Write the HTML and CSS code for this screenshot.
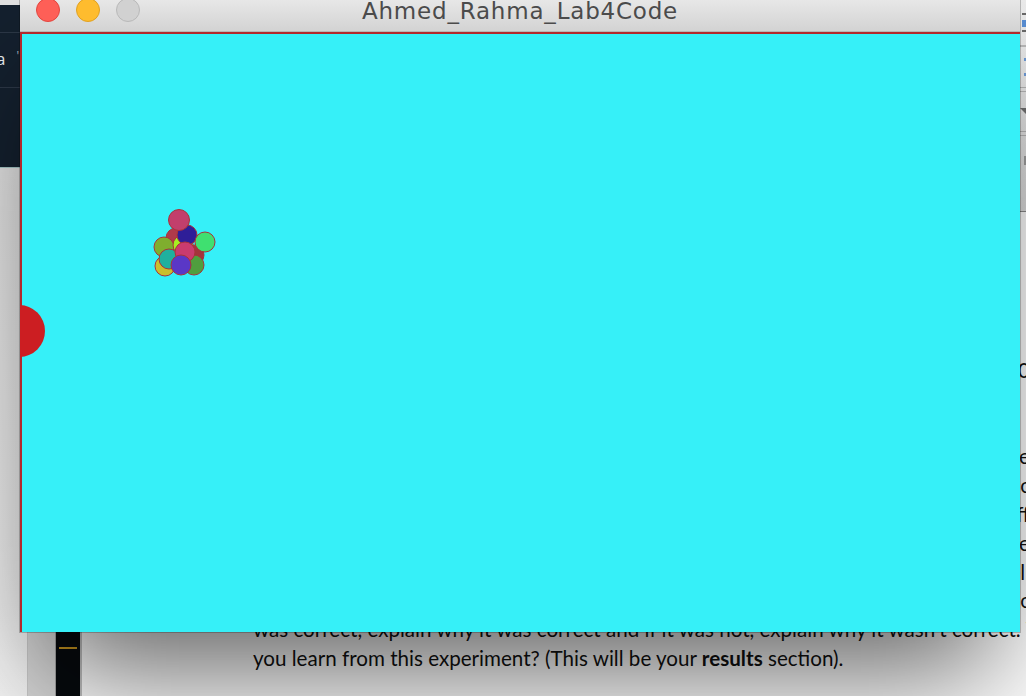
FILE: index.html
```html
<!DOCTYPE html>
<html>
<head>
<meta charset="utf-8">
<title>Ahmed_Rahma_Lab4Code</title>
<link rel="stylesheet" href="styles.css">
</head>
<body>
<div class="screen">
  <aside class="side">
    <div class="side-top"></div>
    <div class="side-nav">
      <div class="nav-row nav-row1"></div>
      <div class="nav-row nav-row2"><span class="nav-a">a</span><span class="nav-tick">'</span></div>
      <div class="nav-row3"></div>
    </div>
    <div class="side-rest">
      <div class="side-col1"></div>
      <div class="side-col2"></div>
    </div>
  </aside>
  <div class="ruler"><div class="ruler-tick"></div></div>
  <main class="page">
    <div class="ribbon">
      <div class="ribbon-tools">
        <span class="rt rt-dash"></span>
        <span class="rt rt-blue"></span>
        <span class="rt rt-dash2"></span>
        <span class="rt rt-line"></span>
        <span class="rt rt-blue-s"></span>
        <span class="rt rt-blue-s2"></span>
        <span class="rt rt-line2"></span>
        <span class="rt rt-tri"></span>
        <span class="rt rt-line3"></span>
        <span class="rt rt-block"></span>
      </div>
    </div>
    <div class="doc">
      <div class="line end">Part 2: Data and Observations (10</div>
      <div class="line end">&nbsp;</div>
      <div class="line end">&nbsp;</div>
      <div class="line end">Describe what happens when you run the code and state</div>
      <div class="line end">Record what you changed in the code and the result of each c</div>
      <div class="line end">Explain which values in the code made the biggest diff</div>
      <div class="line end">Compare the small circles with the large red circle on the</div>
      <div class="line end">Then look back at the hypothesis that you wrote at the start and tell</div>
      <div class="line end">whether it was supported by what you observed, and if it was c</div>
      <div class="line">was correct, explain why it was correct and if it was not, explain why it wasn’t correct. W</div>
      <div class="line">you learn from this experiment? (This will be your <b>results</b> section).</div>
    </div>
  </main>
</div>

<div class="window">
  <div class="titlebar">
    <div class="lights">
      <span class="light light-close"></span>
      <span class="light light-min"></span>
      <span class="light light-max"></span>
    </div>
    <div class="title">Ahmed_Rahma_Lab4Code</div>
    <div class="title-spacer"></div>
  </div>
  <div class="canvas">
    <svg class="sketch" width="1000" height="600" viewBox="0 0 1000 600" xmlns="http://www.w3.org/2000/svg">
      <g transform="translate(-20 -32)" stroke="#a8333a" stroke-width="1">
        <circle cx="19" cy="331" r="26" fill="#cc1e22" stroke="none"/>
        <circle cx="194" cy="255" r="10" fill="#a3343c"/>
        <circle cx="176" cy="238" r="10" fill="#b03a4a"/>
        <circle cx="165" cy="266" r="10" fill="#cabf2c"/>
        <circle cx="164" cy="247" r="10" fill="#7fae2e"/>
        <circle cx="194" cy="265" r="10" fill="#4f9e3e"/>
        <circle cx="183" cy="245" r="10" fill="#a6ee22"/>
        <circle cx="187" cy="235" r="10" fill="#2e1e98"/>
        <circle cx="179" cy="220" r="10.5" fill="#c23f6c"/>
        <circle cx="205" cy="242" r="10" fill="#3fe070"/>
        <circle cx="169" cy="259" r="10" fill="#1fb09e"/>
        <circle cx="185" cy="252" r="10" fill="#c93b6e"/>
        <circle cx="181" cy="265" r="10" fill="#5a37c6"/>
      </g>
    </svg>
  </div>
</div>
</body>
</html>
```

FILE: styles.css
```css
html, body {
  margin: 0;
  padding: 0;
}

body {
  width: 1026px;
  height: 696px;
  overflow: hidden;
  position: relative;
  background: #ffffff;
  font-family: "Lato", "Liberation Sans", sans-serif;
}

.screen {
  display: flex;
  height: 696px;
}

/* left app pane */
.side {
  width: 56px;
  display: flex;
  flex-direction: column;
  flex-shrink: 0;
}

.side-top {
  height: 5px;
  background: #e2e2e2;
}

.side-nav {
  height: 162px;
  background: #14202e;
  display: flex;
  flex-direction: column;
  border-bottom: 1px solid #a9c9c9;
}

.nav-row1 {
  height: 27px;
  border-bottom: 1px solid #2c3746;
}

.nav-row2 {
  height: 55px;
  border-bottom: 1px solid #2c3746;
  display: flex;
  align-items: center;
  gap: 11px;
  color: #e8ecf0;
  font-family: "Open Sans", sans-serif;
  font-size: 17px;
  margin-left: -4px;
  padding-bottom: 4px;
  box-sizing: border-box;
}

.nav-tick {
  font-size: 12px;
  color: #aab4c0;
  padding-bottom: 6px;
}

.nav-row3 {
  flex: 1;
}

.side-rest {
  flex: 1;
  display: flex;
}

.side-col1 {
  width: 27px;
  background: linear-gradient(#e4e4e4, #f4f4f4);
  border-right: 1px solid #c9c9c9;
}

.side-col2 {
  flex: 1;
  background: #d6d6d6;
  border-right: 1px solid #a4a4a4;
}

/* ruler */
.ruler {
  width: 24px;
  flex-shrink: 0;
  background: #070a0e;
  display: flex;
  flex-direction: column;
  justify-content: flex-end;
  padding-bottom: 47px;
  box-sizing: border-box;
}

.ruler-tick {
  height: 2px;
  width: 18px;
  margin-left: 3px;
  background: #c8951f;
}

/* document page */
.page {
  flex: 1;
  background: #ffffff;
  border-left: 2px solid #c2c2c2;
  display: flex;
  flex-direction: column;
  min-width: 0;
}

.ribbon {
  height: 211px;
  background: linear-gradient(#ececec, #dedede);
  border-bottom: 1px solid #8a8a8a;
  display: flex;
  justify-content: flex-end;
}

.ribbon-tools {
  width: 6px;
  display: flex;
  flex-direction: column;
  align-items: flex-end;
  border-left: 1px solid #c4c4c4;
}

.rt {
  display: block;
}

.rt-dash { width: 4px; height: 2px; background: #6a6a6a; margin-top: 13px; }
.rt-blue { width: 4px; height: 7px; background: #5a8fd4; margin-top: 5px; }
.rt-dash2 { width: 4px; height: 2px; background: #6a6a6a; margin-top: 3px; }
.rt-line { width: 6px; height: 2px; background: #b9b9b9; margin-top: 13px; }
.rt-blue-s { width: 2px; height: 3px; background: #6f9bd6; margin-top: 11px; }
.rt-blue-s2 { width: 2px; height: 3px; background: #6f9bd6; margin-top: 12px; }
.rt-line2 { width: 6px; height: 3px; border-top: 1px solid #b5b5b5; border-bottom: 1px solid #b5b5b5; margin-top: 11px; }
.rt-tri {
  width: 0;
  height: 0;
  border-left: 6px solid transparent;
  border-top: 6px solid #707070;
  margin-top: 16px;
}
.rt-line3 { width: 6px; height: 3px; border-top: 1px solid #b5b5b5; border-bottom: 1px solid #b5b5b5; margin-top: 17px; }
.rt-block { width: 2px; height: 9px; background: #a0a0a0; margin-top: 20px; }

.doc {
  padding-top: 144px;
  padding-left: 171px;
  margin-right: -4px;
  color: #111111;
  font-size: 20.6px;
  line-height: 28.8px;
}

.line {
  white-space: nowrap;
}

.line.end {
  text-align: right;
}

.line b {
  font-weight: 700;
}

/* sketch window */
.window {
  position: absolute;
  left: 20px;
  top: -6px;
  width: 1000px;
  box-shadow: 0 66px 110px -26px rgba(0, 0, 0, 0.62), 0 0 0 1px rgba(0, 0, 0, 0.22);
}

.titlebar {
  height: 38px;
  box-sizing: border-box;
  background: linear-gradient(#ebebeb, #d3d3d3);
  border-bottom: 1px solid #b6b6b6;
  display: grid;
  grid-template-columns: 1fr auto 1fr;
  align-items: start;
}

.lights {
  display: flex;
  gap: 16px;
  padding: 4px 0 0 16px;
}

.light {
  width: 24px;
  height: 24px;
  border-radius: 50%;
  box-sizing: border-box;
}

.light-close { background: #fe5f57; border: 1px solid #e2463f; }
.light-min { background: #febc2e; border: 1px solid #e0a123; }
.light-max { background: #d1d1d1; border: 1px solid #b9b9b9; }

.title {
  font-family: "DejaVu Sans", sans-serif;
  font-size: 23px;
  line-height: 28px;
  letter-spacing: 0.8px;
  color: #4b4b4b;
  padding-top: 3px;
}

.canvas {
  height: 600px;
  box-sizing: border-box;
  background: #36f0f8;
  border-top: 2px solid #b3282c;
  border-left: 2px solid #b3282c;
  position: relative;
}

.sketch {
  position: absolute;
  left: -2px;
  top: -2px;
  display: block;
  overflow: hidden;
}
```
